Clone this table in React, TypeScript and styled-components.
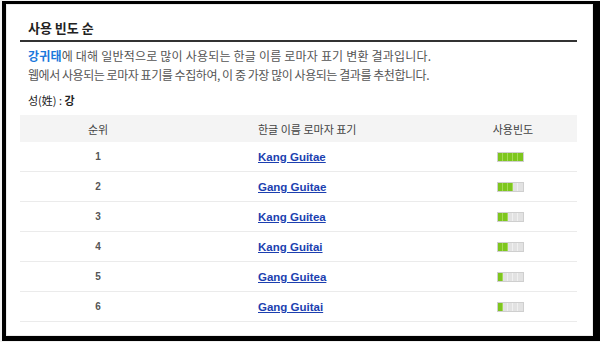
import React from 'react';
import styled, { createGlobalStyle } from 'styled-components';

interface SegProps {
  filled: boolean;
}

interface LineProps {
  spacing: number;
}

interface Row {
  rank: number;
  name: string;
  level: number;
}

const rows: Row[] = [
  { rank: 1, name: 'Kang Guitae', level: 5 },
  { rank: 2, name: 'Gang Guitae', level: 3 },
  { rank: 3, name: 'Kang Guitea', level: 2 },
  { rank: 4, name: 'Kang Guitai', level: 2 },
  { rank: 5, name: 'Gang Guitea', level: 1 },
  { rank: 6, name: 'Gang Guitai', level: 1 },
];

const GlobalStyle = createGlobalStyle`
  html, body {
    margin: 0;
    padding: 0;
    background: #f2f2f2;
  }
  * {
    box-sizing: border-box;
  }
`;

const Frame = styled.div`
  width: 598px;
  height: 340px;
  margin: 1px 0 0 2px;
  border-style: solid;
  border-color: #000;
  border-width: 3px 7px 5px 4px;
  background: #fff;
`;

const Panel = styled.div`
  height: 100%;
  padding: 0 15px 0 13px;
  border: 1px solid #ececec;
  font-family: 'Noto Sans CJK KR', 'Noto Sans', sans-serif;
  color: #555;
`;

const TitleBar = styled.div`
  padding: 16px 8px 5px;
  border-bottom: 2px solid #333;
`;

const Title = styled.h2`
  margin: 0;
  font-size: 13px;
  line-height: 14px;
  font-weight: bold;
  color: #222;
`;

const Description = styled.div`
  margin-top: 4px;
  padding-left: 8px;
  font-size: 12px;
  line-height: 19px;
`;

const Line = styled.p<LineProps>`
  margin: 0;
  letter-spacing: ${props => props.spacing}px;
  white-space: nowrap;
`;

const Highlight = styled.strong`
  color: #1a78dc;
`;

const Surname = styled.div`
  margin-top: 7px;
  padding-left: 8px;
  font-size: 11px;
  line-height: 19px;
  color: #222;

  strong {
    font-weight: bold;
  }
`;

const Table = styled.div`
  margin-top: 5px;
`;

const HeaderRow = styled.div`
  display: grid;
  grid-template-columns: 156px 273px 1fr;
  height: 27px;
  align-items: center;
  background: #f4f4f4;
  font-size: 11px;
  color: #444;
`;

const DataRow = styled.div`
  display: grid;
  grid-template-columns: 156px 273px 1fr;
  height: 30px;
  align-items: center;
  border-bottom: 1px solid #ebebeb;
  font-family: 'Liberation Sans', Arial, sans-serif;
  line-height: 14px;
`;

const RankCell = styled.div`
  text-align: center;
  font-size: 10px;
  font-weight: bold;
  color: #555;
`;

const NameCell = styled.div`
  padding-left: 82px;
`;

const CenterCell = styled.div`
  text-align: center;
`;

const FreqCell = styled.div`
  padding-left: 48px;
  display: flex;
`;

const NameLink = styled.a`
  font-size: 11.5px;
  font-weight: bold;
  color: #1c3fb0;
  text-decoration: underline;
`;

const Bar = styled.div`
  display: flex;
  height: 10px;
  border: 1px solid #cfcfcf;
`;

const Seg = styled.span<SegProps>`
  width: 5px;
  height: 100%;
  background: ${props => (props.filled ? '#7ec61e' : '#e2e2e2')};
  border-right: 1px solid ${props => (props.filled ? '#a4db55' : '#f0f0f0')};

  &:last-child {
    border-right: none;
  }
`;

const FreqBar: React.FunctionComponent<{ level: number }> = ({ level }) => (
  <Bar>
    {[0, 1, 2, 3, 4].map(i => (
      <Seg key={i} filled={i < level} />
    ))}
  </Bar>
);

const App: React.FunctionComponent = () => {
  return (
    <>
      <GlobalStyle />
      <Frame>
        <Panel>
          <TitleBar>
            <Title>사용 빈도 순</Title>
          </TitleBar>

          <Description>
            <Line spacing={0.2}>
              <Highlight>강귀태</Highlight>에 대해 일반적으로 많이 사용되는 한글 이름 로마자 표기 변환 결과입니다.
            </Line>
            <Line spacing={-0.45}>
              웹에서 사용되는 로마자 표기를 수집하여, 이 중 가장 많이 사용되는 결과를 추천합니다.
            </Line>
          </Description>

          <Surname>
            성(姓) : <strong>강</strong>
          </Surname>

          <Table>
            <HeaderRow>
              <CenterCell>순위</CenterCell>
              <NameCell>한글 이름 로마자 표기</NameCell>
              <CenterCell>사용빈도</CenterCell>
            </HeaderRow>
            {rows.map(row => (
              <DataRow key={row.rank}>
                <RankCell>{row.rank}</RankCell>
                <NameCell>
                  <NameLink href="#">{row.name}</NameLink>
                </NameCell>
                <FreqCell>
                  <FreqBar level={row.level} />
                </FreqCell>
              </DataRow>
            ))}
          </Table>
        </Panel>
      </Frame>
    </>
  );
};

export default App;
